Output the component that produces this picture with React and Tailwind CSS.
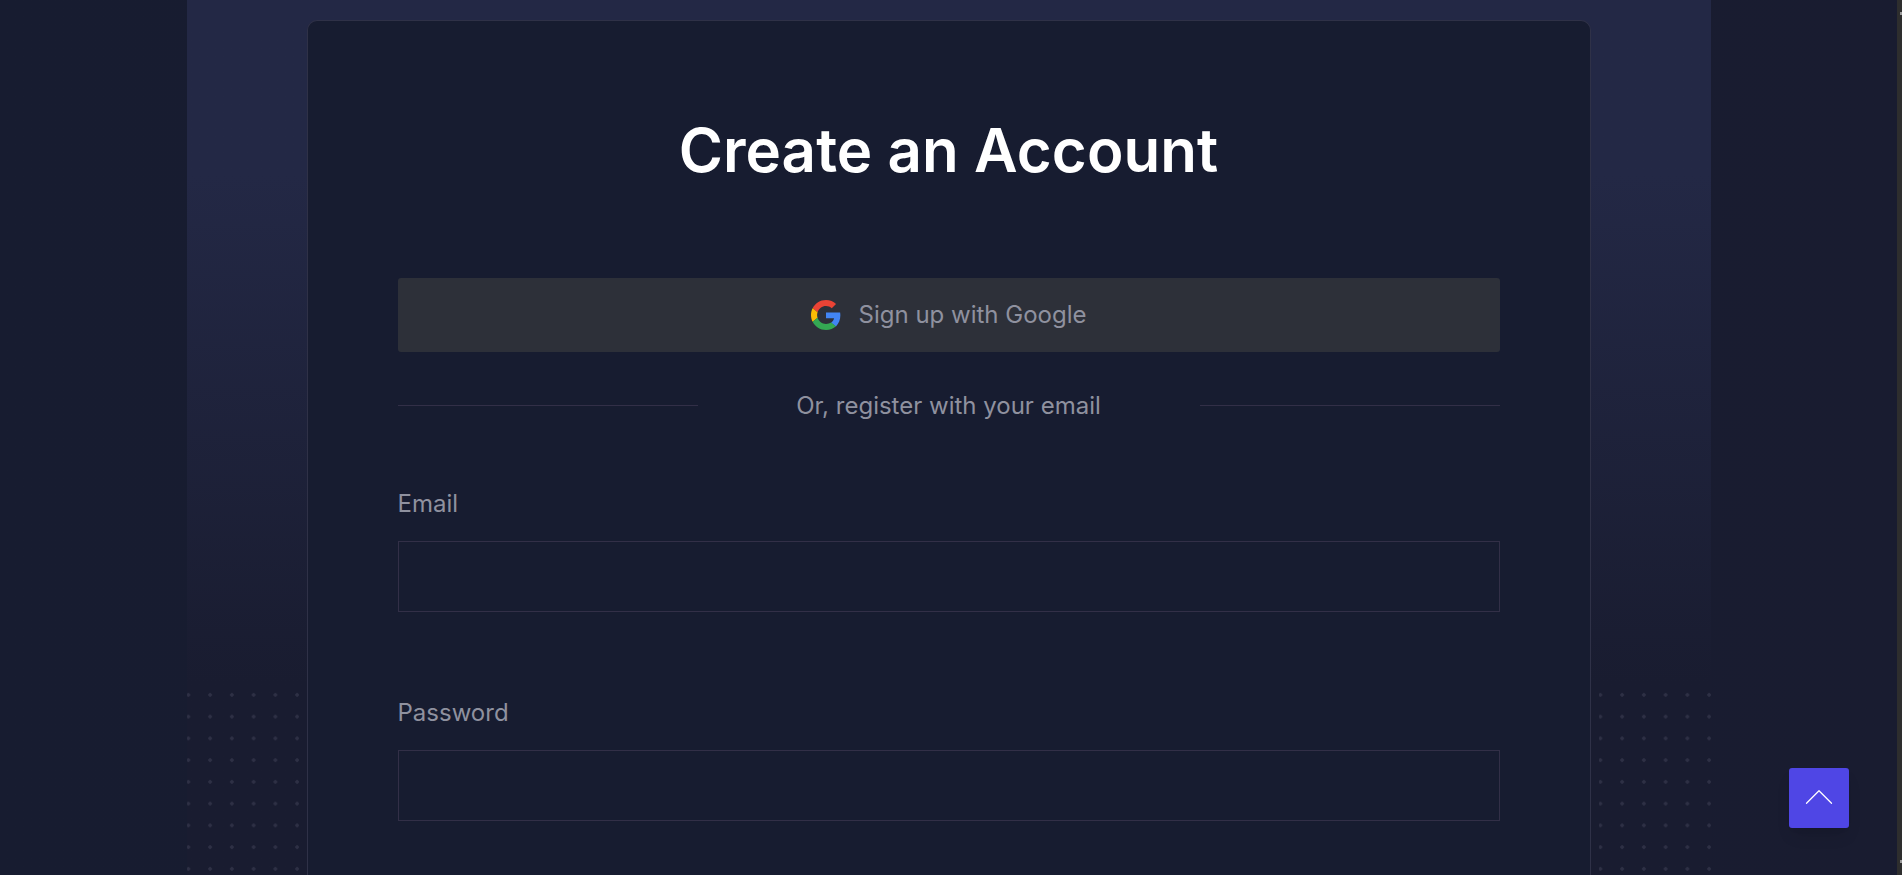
import { ChevronUp } from 'lucide-react'

const GoogleIcon = () => (
    <svg viewBox="0 0 48 48" className="w-[30px] h-[30px] shrink-0">
        <path fill="#EA4335" d="M24 9.5c3.54 0 6.71 1.22 9.21 3.6l6.85-6.85C35.9 2.38 30.47 0 24 0 14.62 0 6.51 5.38 2.56 13.22l7.98 6.19C12.43 13.72 17.74 9.5 24 9.5z" />
        <path fill="#4285F4" d="M46.98 24.55c0-1.57-.15-3.09-.38-4.55H24v9.02h12.94c-.58 2.96-2.26 5.48-4.78 7.18l7.73 6c4.51-4.18 7.09-10.36 7.09-17.65z" />
        <path fill="#FBBC05" d="M10.53 28.59c-.48-1.45-.76-2.99-.76-4.59s.27-3.14.76-4.59l-7.98-6.19C.92 16.46 0 20.12 0 24c0 3.88.92 7.54 2.56 10.78l7.97-6.19z" />
        <path fill="#34A853" d="M24 48c6.48 0 11.93-2.13 15.89-5.81l-7.73-6c-2.15 1.45-4.92 2.3-8.16 2.3-6.26 0-11.57-4.22-13.47-9.91l-7.98 6.19C6.51 42.62 14.62 48 24 48z" />
    </svg>
)

const Field = ({ label, className }) => (
    <div className={className}>
        <label className="block text-[24px] leading-[36px] pt-px h-9 text-[#8f919f] mb-5">{label}</label>
        <input type="text" className="block w-full h-[71px] bg-transparent border border-[#322f47] outline-none" />
    </div>
)

export default function App() {
    return (
        <div className="flex h-[875px] overflow-hidden bg-linear-to-r from-[#171c30] to-[#191c30] font-['Inter',sans-serif]">
            <main className="relative flex-1 h-full">
                <div className="relative w-[1524px] h-full mx-auto px-[120px] pt-5 bg-linear-to-b from-[#232845] from-20% to-[#191c30] to-[78%]">
                    {/* dotted corners beside the card */}
                    <div className="absolute left-0 top-[684px] bottom-0 w-[112px] bg-[radial-gradient(circle,#2e3045_1.5px,transparent_2px)] bg-[size:21.75px_21.75px] bg-[position:-9.5px_0]"></div>
                    <div className="absolute right-0 top-[684px] bottom-0 w-[112px] bg-[radial-gradient(circle,#2e3045_1.5px,transparent_2px)] bg-[size:21.75px_21.75px] bg-[position:-9.5px_0]"></div>

                    <div className="relative h-full bg-[#171c30] border-t border-x border-[#2f3147] rounded-t-[10px] px-[90px] pt-[93px]">
                        <h1 className="text-[60px] leading-[72px] font-semibold tracking-[0.07px] text-white text-center">Create an Account</h1>

                        <button className="flex items-center justify-center gap-[18px] w-full h-[74px] mt-[92px] bg-[#2d3039] rounded-[3px] text-[24px] text-[#8f919f]">
                            <GoogleIcon />
                            Sign up with Google
                        </button>

                        <div className="flex items-center justify-between h-9 mt-[35px] text-[24px] leading-[36px] text-[#8f919f]">
                            <span className="w-[300px] h-px bg-[#322f47]"></span>
                            <span className="pt-px">Or, register with your email</span>
                            <span className="w-[300px] h-px bg-[#322f47]"></span>
                        </div>

                        <Field label="Email" className="mt-[62px]" />
                        <Field label="Password" className="mt-[82px]" />
                    </div>
                </div>

                <button className="absolute right-[48px] bottom-[47px] flex items-center justify-center w-[60px] h-[60px] bg-[#4f46e5] rounded-[3px] shadow-lg text-white">
                    <ChevronUp size={50} strokeWidth={0.6} className="mb-[3px]" />
                </button>
            </main>

            {/* browser scrollbar strip */}
            <div className="flex flex-col items-end justify-between w-[5px] h-full pt-3 pb-3 bg-[#2e2e2e]">
                <span className="w-0.5 h-[3px] bg-[#9a9a9a]"></span>
                <span className="w-0.5 h-[3px] bg-[#9a9a9a]"></span>
            </div>
        </div>
    )
}
